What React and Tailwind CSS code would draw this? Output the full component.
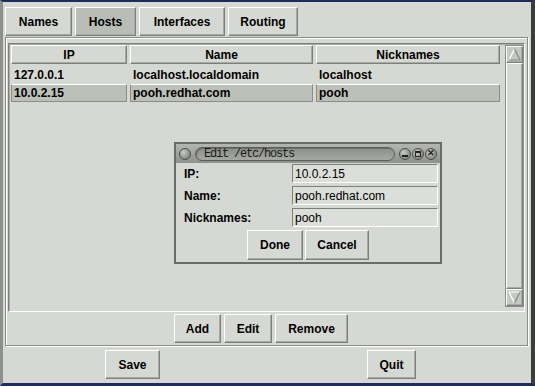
import React from "react";

const raised =
  "border border-t-white border-l-white border-b-[#7d7f7b] border-r-[#7d7f7b] shadow-[inset_-1px_-1px_0_#a8aba5]";
const inset =
  "border border-t-[#7d7f7b] border-l-[#7d7f7b] border-b-white border-r-white";

const Btn = ({ label, w, pressed = false, h = "h-[29px]" }) => (
  <div
    className={`${raised} ${h} ${w} ${pressed ? "bg-[#b9bdb6]" : "bg-[#d6d9d3]"} flex items-center justify-center font-bold text-[12px] text-black`}
  >
    {label}
  </div>
);

const Header = ({ label }) => (
  <div className={`${raised} h-[19px] flex items-center justify-center font-bold text-[12px]`}>
    {label}
  </div>
);

const Cell = ({ text, sel }) => (
  <div
    className={`h-[18px] flex items-center pl-[2px] font-bold text-[12px] border ${
      sel
        ? "bg-[#bcc0b9] border-t-white border-l-[#8a8c88] border-b-[#8a8c88] border-r-[#8a8c88]"
        : "border-transparent"
    }`}
  >
    {text}
  </div>
);

const Arrow = ({ up }) => (
  <div className={`${raised} h-[17px] bg-[#c4c8c1] flex items-center justify-center`}>
    <svg width="13" height="13" viewBox="0 0 13 13">
      {up ? (
        <>
          <path d="M6.5 1 L1 12 L12 12 Z" fill="#c4c8c1" />
          <path d="M6.5 1 L1 12" stroke="#fff" strokeWidth="1.2" fill="none" />
          <path d="M6.5 1 L12 12 L1 12" stroke="#8a8c88" strokeWidth="1.2" fill="none" />
        </>
      ) : (
        <>
          <path d="M1 1 L12 1 L6.5 12 Z" fill="#c4c8c1" />
          <path d="M6.5 12 L1 1 L12 1" stroke="#fff" strokeWidth="1.2" fill="none" />
          <path d="M12 1 L6.5 12" stroke="#8a8c88" strokeWidth="1.2" fill="none" />
        </>
      )}
    </svg>
  </div>
);

const Ball = ({ children }) => (
  <div className="w-[12px] h-[12px] rounded-full border border-[#4d4f4b] bg-[radial-gradient(circle_at_35%_35%,#c9ccc6,#6e716c)] flex items-center justify-center">
    {children}
  </div>
);

const Field = ({ label, value }) => (
  <div className="flex items-center h-[19px] w-full">
    <div className="flex-1 pl-[8px] font-bold text-[12px]">{label}</div>
    <div className={`${inset} w-[146px] h-[19px] mr-[2px] bg-[#dcdfd9] flex items-center pl-[2px] text-[12px]`}>
      {value}
    </div>
  </div>
);

export default function App() {
  return (
    <div
      className="relative w-[535px] h-[386px] flex flex-col bg-[#d6d9d3] border-t-2 border-t-[#1e2b5c] border-b-[3px] border-b-[#1e2b5c] border-l-[3px] border-l-[#8e908c] border-r-[4px] border-r-[#3b3d3a] text-black"
      style={{ fontFamily: '"Liberation Sans", Arial, sans-serif' }}
    >
      {/* tabs */}
      <div className="flex gap-[3px] pl-[2px] mt-[5px]">
        <Btn label="Names" w="w-[67px]" />
        <Btn label="Hosts" w="w-[61px]" pressed />
        <Btn label="Interfaces" w="w-[86px]" />
        <Btn label="Routing" w="w-[70px]" />
      </div>

      {/* notebook page */}
      <div className="ml-[2px] mr-[3px] mt-[1px] h-[309px] border border-[#8a8c88] shadow-[inset_1px_1px_0_#fff,1px_1px_0_#fff] flex flex-col px-[2px] pt-[5px]">
        <div className={`${inset} h-[269px] flex pl-[2px] pt-[1px] pr-0 shadow-[inset_1px_1px_0_#a8aba5]`}>
          <div className="w-[489px] flex flex-col">
            <div className="grid grid-cols-[116px_183px_184px] gap-x-[3px]">
              <Header label="IP" />
              <Header label="Name" />
              <Header label="Nicknames" />
            </div>
            <div className="mt-[2px] grid grid-cols-[116px_183px_184px] gap-x-[3px]">
              <Cell text="127.0.0.1" />
              <Cell text="localhost.localdomain" />
              <Cell text="localhost" />
              <Cell text="10.0.2.15" sel />
              <Cell text="pooh.redhat.com" sel />
              <Cell text="pooh" sel />
            </div>
          </div>
          <div className="ml-[5px] w-[20px] h-[262px] border border-[#8a8c88] bg-[#c8ccc5] flex flex-col">
            <Arrow up />
            <div className={`${raised} flex-1 bg-[#d6d9d3]`} />
            <Arrow />
          </div>
        </div>
        <div className="mt-[2px] flex gap-[3px] justify-center pr-[11px]">
          <Btn label="Add" w="w-[47px]" />
          <Btn label="Edit" w="w-[48px]" />
          <Btn label="Remove" w="w-[73px]" />
        </div>
      </div>

      {/* bottom buttons */}
      <div className="mt-[4px] grid grid-cols-2 justify-items-center pr-[10px]">
        <Btn label="Save" w="w-[55px]" />
        <Btn label="Quit" w="w-[49px]" />
      </div>

      {/* dialog */}
      <div className="absolute left-[171px] top-[140px] w-[268px] h-[122px] border-2 border-[#6a6c68] bg-[#d6d9d3] flex flex-col">
        <div className="h-[19px] bg-[linear-gradient(#b4b7b1,#8f928c)] flex items-center px-[3px] gap-[4px]">
          <Ball />
          <div className="flex-1 h-[14px] rounded-full border border-[#5b5d59] bg-[linear-gradient(#8c8f89,#a6a9a3)] shadow-[inset_1px_1px_0_#6d706b] flex items-center pl-[8px]">
            <span
              className="text-[12px] text-[#1a1a1a] tracking-[-1.2px] leading-none"
              style={{ fontFamily: '"Liberation Mono", "DejaVu Sans Mono", monospace' }}
            >
              Edit /etc/hosts
            </span>
          </div>
          <div className="flex gap-[1px]">
            <Ball>
              <div className="w-[6px] h-[2px] bg-[#222] mt-[4px]" />
            </Ball>
            <Ball>
              <div className="w-[6px] h-[6px] border border-[#222] border-t-2" />
            </Ball>
            <Ball>
              <span className="text-[9px] font-bold leading-none text-[#222]">✕</span>
            </Ball>
          </div>
        </div>
        <div className="flex flex-col gap-[3px] mt-[1px]">
          <Field label="IP:" value="10.0.2.15" />
          <Field label="Name:" value="pooh.redhat.com" />
          <Field label="Nicknames:" value="pooh" />
        </div>
        <div className="mt-[3px] flex justify-center gap-[2px]">
          <Btn label="Done" w="w-[56px]" h="h-[30px]" />
          <Btn label="Cancel" w="w-[64px]" h="h-[30px]" />
        </div>
      </div>
    </div>
  );
}
